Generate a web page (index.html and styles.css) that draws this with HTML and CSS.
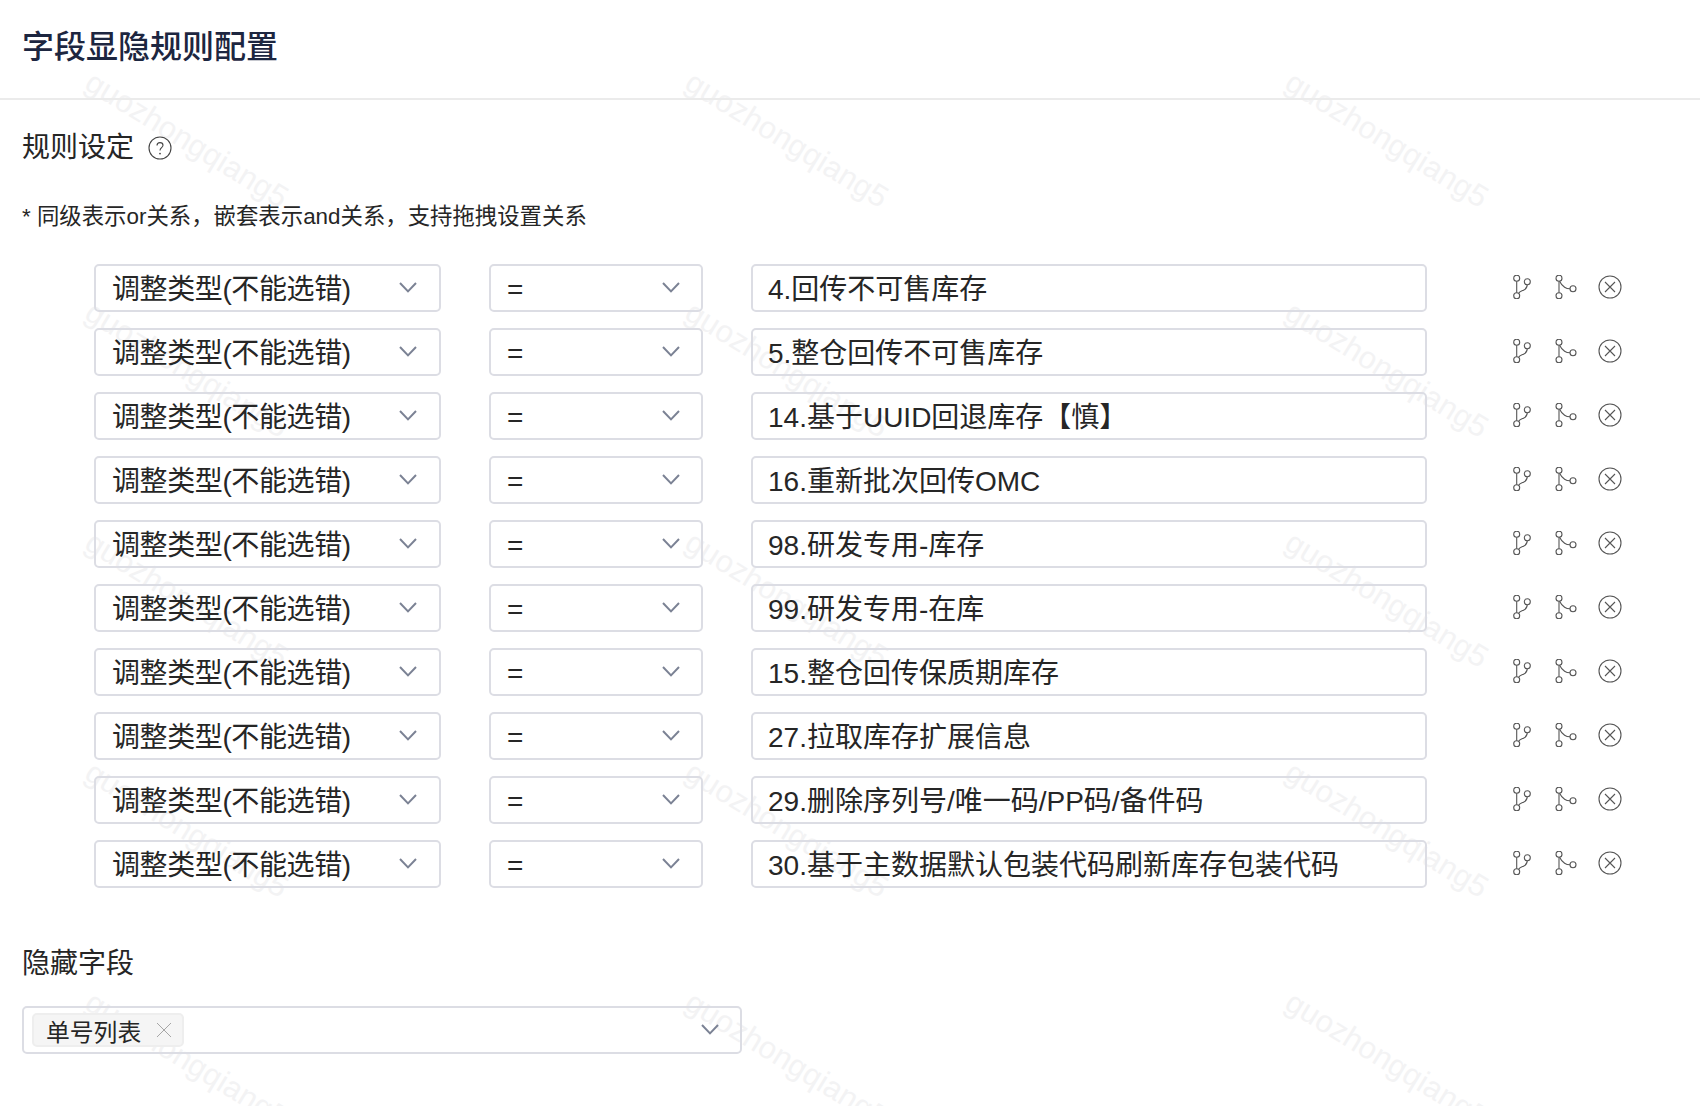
FILE: index.html
```html
<!DOCTYPE html>
<html lang="zh-CN">
<head>
<meta charset="utf-8">
<title>字段显隐规则配置</title>
<link rel="stylesheet" href="styles.css">
</head>
<body>
<svg class="defs" width="0" height="0" aria-hidden="true">
  <symbol id="chev" viewBox="0 0 18 11"><path d="M1 1l8 8.4L17 1" fill="none" stroke="currentColor" stroke-width="2"/></symbol>
  <symbol id="i-branch" viewBox="0 0 24 24"><g fill="none" stroke="currentColor" stroke-width="1.1"><circle cx="6.7" cy="3.2" r="3"/><circle cx="17.3" cy="6.8" r="3"/><circle cx="6.7" cy="20.8" r="3"/><path d="M6.7 6.2v11.6"/><path d="M8.5 18.4c1-1.8 3.2-2.4 5-3.2 2-.9 3.4-2.5 3.8-5.4"/></g></symbol>
  <symbol id="i-child" viewBox="0 0 24 24"><g fill="none" stroke="currentColor" stroke-width="1.1"><circle cx="5" cy="3.2" r="3"/><circle cx="5" cy="20.8" r="3"/><circle cx="19" cy="13.8" r="3"/><path d="M5 6.2v11.6"/><path d="M5.6 6.2c1.2 2.6 3 4.6 5 6 1.6 1.1 3.4 1.6 5.4 1.6"/></g></symbol>
  <symbol id="i-close" viewBox="0 0 24 24"><g fill="none" stroke="currentColor" stroke-width="1.1"><circle cx="12" cy="12" r="11"/><path d="M7 7l10 10M17 7L7 17"/></g></symbol>
</svg>
<div class="watermarks" aria-hidden="true">
  <span>guozhongqiang5</span><span>guozhongqiang5</span><span>guozhongqiang5</span>
  <span>guozhongqiang5</span><span>guozhongqiang5</span><span>guozhongqiang5</span>
  <span>guozhongqiang5</span><span>guozhongqiang5</span><span>guozhongqiang5</span>
  <span>guozhongqiang5</span><span>guozhongqiang5</span><span>guozhongqiang5</span>
  <span>guozhongqiang5</span><span>guozhongqiang5</span><span>guozhongqiang5</span>
</div>
<header class="page-head"><h1>字段显隐规则配置</h1></header>
<main class="content">
  <h2 class="section-title">规则设定
    <svg class="help" viewBox="0 0 24 24" aria-hidden="true"><circle cx="12" cy="12" r="11" fill="none" stroke="currentColor" stroke-width="1.1"/><path d="M9 9.6c0-1.9 1.3-3 3-3s3 1.1 3 2.7c0 2.3-3 2.5-3 5.2" fill="none" stroke="currentColor" stroke-width="1.1"/><circle cx="12" cy="17.6" r=".9" fill="currentColor"/></svg>
  </h2>
  <p class="hint">* 同级表示or关系，嵌套表示and关系，支持拖拽设置关系</p>
  <div class="rules">
    <div class="rule">
      <div class="box field">调整类型(不能选错)<svg class="chev"><use href="#chev"/></svg></div>
      <div class="box op"><span class="eq">=</span><svg class="chev"><use href="#chev"/></svg></div>
      <div class="box value">4.回传不可售库存</div>
      <div class="actions"><svg class="act"><use href="#i-branch"/></svg><svg class="act"><use href="#i-child"/></svg><svg class="act"><use href="#i-close"/></svg></div>
    </div>
    <div class="rule">
      <div class="box field">调整类型(不能选错)<svg class="chev"><use href="#chev"/></svg></div>
      <div class="box op"><span class="eq">=</span><svg class="chev"><use href="#chev"/></svg></div>
      <div class="box value">5.整仓回传不可售库存</div>
      <div class="actions"><svg class="act"><use href="#i-branch"/></svg><svg class="act"><use href="#i-child"/></svg><svg class="act"><use href="#i-close"/></svg></div>
    </div>
    <div class="rule">
      <div class="box field">调整类型(不能选错)<svg class="chev"><use href="#chev"/></svg></div>
      <div class="box op"><span class="eq">=</span><svg class="chev"><use href="#chev"/></svg></div>
      <div class="box value">14.基于UUID回退库存【慎】</div>
      <div class="actions"><svg class="act"><use href="#i-branch"/></svg><svg class="act"><use href="#i-child"/></svg><svg class="act"><use href="#i-close"/></svg></div>
    </div>
    <div class="rule">
      <div class="box field">调整类型(不能选错)<svg class="chev"><use href="#chev"/></svg></div>
      <div class="box op"><span class="eq">=</span><svg class="chev"><use href="#chev"/></svg></div>
      <div class="box value">16.重新批次回传OMC</div>
      <div class="actions"><svg class="act"><use href="#i-branch"/></svg><svg class="act"><use href="#i-child"/></svg><svg class="act"><use href="#i-close"/></svg></div>
    </div>
    <div class="rule">
      <div class="box field">调整类型(不能选错)<svg class="chev"><use href="#chev"/></svg></div>
      <div class="box op"><span class="eq">=</span><svg class="chev"><use href="#chev"/></svg></div>
      <div class="box value">98.研发专用-库存</div>
      <div class="actions"><svg class="act"><use href="#i-branch"/></svg><svg class="act"><use href="#i-child"/></svg><svg class="act"><use href="#i-close"/></svg></div>
    </div>
    <div class="rule">
      <div class="box field">调整类型(不能选错)<svg class="chev"><use href="#chev"/></svg></div>
      <div class="box op"><span class="eq">=</span><svg class="chev"><use href="#chev"/></svg></div>
      <div class="box value">99.研发专用-在库</div>
      <div class="actions"><svg class="act"><use href="#i-branch"/></svg><svg class="act"><use href="#i-child"/></svg><svg class="act"><use href="#i-close"/></svg></div>
    </div>
    <div class="rule">
      <div class="box field">调整类型(不能选错)<svg class="chev"><use href="#chev"/></svg></div>
      <div class="box op"><span class="eq">=</span><svg class="chev"><use href="#chev"/></svg></div>
      <div class="box value">15.整仓回传保质期库存</div>
      <div class="actions"><svg class="act"><use href="#i-branch"/></svg><svg class="act"><use href="#i-child"/></svg><svg class="act"><use href="#i-close"/></svg></div>
    </div>
    <div class="rule">
      <div class="box field">调整类型(不能选错)<svg class="chev"><use href="#chev"/></svg></div>
      <div class="box op"><span class="eq">=</span><svg class="chev"><use href="#chev"/></svg></div>
      <div class="box value">27.拉取库存扩展信息</div>
      <div class="actions"><svg class="act"><use href="#i-branch"/></svg><svg class="act"><use href="#i-child"/></svg><svg class="act"><use href="#i-close"/></svg></div>
    </div>
    <div class="rule">
      <div class="box field">调整类型(不能选错)<svg class="chev"><use href="#chev"/></svg></div>
      <div class="box op"><span class="eq">=</span><svg class="chev"><use href="#chev"/></svg></div>
      <div class="box value">29.删除序列号/唯一码/PP码/备件码</div>
      <div class="actions"><svg class="act"><use href="#i-branch"/></svg><svg class="act"><use href="#i-child"/></svg><svg class="act"><use href="#i-close"/></svg></div>
    </div>
    <div class="rule">
      <div class="box field">调整类型(不能选错)<svg class="chev"><use href="#chev"/></svg></div>
      <div class="box op"><span class="eq">=</span><svg class="chev"><use href="#chev"/></svg></div>
      <div class="box value">30.基于主数据默认包装代码刷新库存包装代码</div>
      <div class="actions"><svg class="act"><use href="#i-branch"/></svg><svg class="act"><use href="#i-child"/></svg><svg class="act"><use href="#i-close"/></svg></div>
    </div>
  </div>
  <h2 class="section-title hidden-title">隐藏字段</h2>
  <div class="box multi">
    <span class="tag">单号列表<svg class="tag-x" viewBox="0 0 16 16" aria-hidden="true"><path d="M1 1l14 14M15 1L1 15" fill="none" stroke="currentColor" stroke-width="1"/></svg></span>
    <svg class="chev"><use href="#chev"/></svg>
  </div>
</main>
</body>
</html>
```
FILE: styles.css
```css
* { box-sizing: border-box; }
html, body { margin: 0; padding: 0; }
body {
  position: relative;
  width: 1700px;
  height: 1106px;
  overflow: hidden;
  background: #fff;
  color: #262626;
  font-family: "Liberation Sans", "Noto Sans CJK SC", sans-serif;
}
.defs { position: absolute; }

.watermarks {
  position: absolute;
  inset: 65px 0 0 89px;
  display: grid;
  grid-template-columns: repeat(3, 600px);
  grid-auto-rows: 230px;
  pointer-events: none;
  z-index: 0;
}
.watermarks span {
  display: block;
  width: max-content;
  height: 34px;
  line-height: 34px;
  font-size: 31px;
  letter-spacing: 0.15px;
  color: #f3f3f4;
  transform-origin: 0 0;
  transform: translate(8px, 0) rotate(31.5deg);
}

.page-head {
  position: relative;
  z-index: 1;
  height: 100px;
  padding: 27px 22px 0;
  border-bottom: 2px solid #ebebeb;
}
.page-head h1 {
  margin: 0;
  font-size: 32px;
  line-height: 40px;
  font-weight: 500;
  color: #1d2640;
}

.content { position: relative; z-index: 1; padding: 27px 22px 0; }
.section-title {
  display: flex;
  align-items: center;
  margin: 0;
  height: 36px;
  font-size: 28px;
  font-weight: 400;
  color: #262626;
}
.help { width: 24px; height: 24px; margin: 6px 0 0 14px; color: #444; }
.hint {
  margin: 39px 0 0;
  height: 30px;
  line-height: 30px;
  font-size: 22.4px;
  color: #262626;
}

.rules {
  display: flex;
  flex-direction: column;
  gap: 16px;
  margin-top: 32px;
  padding-left: 72px;
}
.rule { display: flex; align-items: center; height: 48px; }

.box {
  display: flex;
  align-items: center;
  height: 48px;
  padding-bottom: 2px;
  border: 2px solid #dcdde4;
  border-radius: 5px;
  background: transparent;
  font-size: 28px;
  white-space: nowrap;
}
.field { width: 347px; padding-left: 16px; padding-right: 22px; justify-content: space-between; letter-spacing: -0.4px; }
.op { width: 214px; margin-left: 48px; padding-left: 16px; padding-right: 21px; justify-content: space-between; }
.eq { position: relative; top: 3px; }
.value { width: 676px; margin-left: 48px; padding-left: 15px; padding-right: 14px; }

.chev { width: 18px; height: 11px; color: #7b8294; flex: none; }

.actions { display: flex; gap: 20px; margin-left: 83px; margin-bottom: 3px; color: #555; }
.act { width: 24px; height: 24px; display: block; }

.hidden-title { margin-top: 55px; }
.multi {
  width: 720px;
  margin-top: 27px;
  padding: 0 21px 0 8px;
  justify-content: space-between;
}
.multi .chev { position: relative; top: -1px; }
.tag {
  display: inline-flex;
  align-items: center;
  height: 34px;
  padding: 0 10px 0 12px;
  border: 2px solid #eeeeee;
  border-radius: 5px;
  background: #f5f5f5;
  font-size: 23.8px;
}
.tag-x { width: 16px; height: 16px; margin-left: 15px; color: #a6a6a6; }
```
